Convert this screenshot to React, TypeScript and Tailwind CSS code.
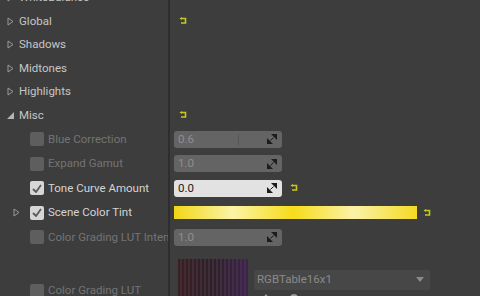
import React from 'react';

const font = { fontFamily: 'Roboto, "Noto Sans", sans-serif' };

function Reset() {
  return (
    <svg width="9" height="8" viewBox="0 0 9 8" className="shrink-0">
      <path d="M3 1.5 H6.5 V6 H2" fill="none" stroke="#c8c81e" strokeWidth="1.6" />
      <path d="M0.5 1.5 L3 0 L3 3 Z" fill="#c8c81e" />
    </svg>
  );
}

function Closed() {
  return (
    <svg width="7" height="9" viewBox="0 0 7 9" className="shrink-0">
      <path d="M1 1 L6 4.5 L1 8 Z" fill="none" stroke="#9a9a9a" strokeWidth="1" />
    </svg>
  );
}

function Open() {
  return (
    <svg width="7" height="7" viewBox="0 0 7 7" className="shrink-0">
      <path d="M7 0 L7 7 L0 7 Z" fill="#b4b4b4" />
    </svg>
  );
}

function Spin() {
  return (
    <svg width="10" height="10" viewBox="0 0 10 10" className="shrink-0">
      <path d="M4 0 H10 V6 Z" fill="#1c1c1c" />
      <path d="M0 4 V10 H6 Z" fill="#1c1c1c" />
      <path d="M3.5 6.5 L6.5 3.5" stroke="#1c1c1c" strokeWidth="1" />
    </svg>
  );
}

function Check({ on }: { on: boolean }) {
  return (
    <div
      className={`flex h-[14px] w-[14px] shrink-0 items-center justify-center rounded-[2px] ${
        on ? 'bg-[#d6d6d6]' : 'bg-[#5e5e5e]'
      }`}
    >
      {on && (
        <svg width="10" height="9" viewBox="0 0 10 9">
          <path d="M1 5 L4 8 L9 1" fill="none" stroke="#5a5a5a" strokeWidth="1.8" />
        </svg>
      )}
    </div>
  );
}

function NumField({ value, on, slider }: { value: string; on?: boolean; slider?: boolean }) {
  return (
    <div
      className={`relative flex h-[17px] w-[108px] shrink-0 items-center justify-between rounded-[3px] pl-[4px] pr-[5px] text-[11.5px] ${
        on ? 'bg-[#e2e2e2] text-[#202020]' : 'bg-[#646464] text-[#8e8e8e]'
      }`}
    >
      <span>{value}</span>
      {slider && <div className="absolute left-[64px] top-[3px] h-[11px] w-px bg-[#555]" />}
      <Spin />
    </div>
  );
}

function Header({ label, open, reset }: { label: string; open?: boolean; reset?: boolean }) {
  return (
    <div className="flex h-[23.5px] shrink-0">
      <div className="flex w-[170px] shrink-0 items-center gap-[5px] border-r-2 border-[#2e2e2e] pl-[7px] text-[11.5px] text-[#c6c6c6]">
        <span className="flex w-[7px] justify-center">{open ? <Open /> : <Closed />}</span>
        <span>{label}</span>
      </div>
      <div className="flex flex-1 items-center pl-[9px]">{reset && <Reset />}</div>
    </div>
  );
}

function Prop({
  label,
  on,
  arrow,
  children,
  h = 'h-[24.5px]',
}: {
  label: string;
  on: boolean;
  arrow?: boolean;
  children?: React.ReactNode;
  h?: string;
}) {
  return (
    <div className={`flex shrink-0 ${h}`}>
      <div className="flex w-[170px] shrink-0 items-center overflow-hidden whitespace-nowrap border-r-2 border-[#2e2e2e] text-[11.5px]">
        <span className="flex w-[30px] shrink-0 justify-center pl-[3px]">{arrow && <Closed />}</span>
        <Check on={on} />
        <span className={`ml-[4px] min-w-0 flex-1 overflow-hidden ${on ? 'text-[#d4d4d4]' : 'text-[#747474]'}`}>
          {label}
        </span>
      </div>
      <div className="flex flex-1 items-center pl-[4px]">{children}</div>
    </div>
  );
}

export default function App() {
  return (
    <div className="h-[296px] w-[480px] overflow-hidden bg-[#3d3d3d]" style={font}>
      <div className="-mt-[14px] flex flex-col">
        <Header label="WhiteBalance" />
        <Header label="Global" reset />
        <Header label="Shadows" />
        <Header label="Midtones" />
        <Header label="Highlights" />
        <Header label="Misc" open reset />
        <Prop label="Blue Correction" on={false}>
          <NumField value="0.6" slider />
        </Prop>
        <Prop label="Expand Gamut" on={false}>
          <NumField value="1.0" />
        </Prop>
        <Prop label="Tone Curve Amount" on>
          <NumField value="0.0" on />
          <span className="ml-[8px]">
            <Reset />
          </span>
        </Prop>
        <Prop label="Scene Color Tint" on arrow>
          <div className="h-[13px] w-[243px] shrink-0 bg-[linear-gradient(90deg,#f2d616_0%,#fbf4a6_24%,#f7dc1a_49%,#fbf2a8_74%,#f4da22_100%)]" />
          <span className="ml-[6px]">
            <Reset />
          </span>
        </Prop>
        <Prop label="Color Grading LUT Intensity" on={false}>
          <NumField value="1.0" />
        </Prop>
        <Prop label="Color Grading LUT" on={false} h="h-[82px]">
          <div className="flex h-full flex-1 items-start pl-[4px] pt-[9px]">
            <div className="relative h-[70px] w-[70px] shrink-0 bg-[repeating-linear-gradient(90deg,#2b2224_0px,#2b2224_2px,#3f2d3c_2px,#3f2d3c_4px)]">
              <div className="absolute inset-0 bg-[linear-gradient(90deg,rgba(90,30,30,0.25),rgba(0,0,0,0)_50%,rgba(90,40,140,0.35))]" />
            </div>
            <div className="ml-[6px] mt-[11px] flex shrink-0 flex-col">
              <div className="flex h-[20px] w-[176px] items-center justify-between rounded-[2px] bg-[#474747] pl-[3px] pr-[6px] text-[11.5px] text-[#8a8a8a]">
                <span>RGBTable16x1</span>
                <svg width="8" height="5" viewBox="0 0 8 5">
                  <path d="M0 0 H8 L4 5 Z" fill="#8a8a8a" />
                </svg>
              </div>
              <div className="mt-[4px] flex gap-[20px] pl-[8px]">
                <svg width="8" height="8" viewBox="0 0 8 8">
                  <path d="M4 0 L8 5 H0 Z" fill="#9a9a9a" />
                </svg>
                <div className="h-[8px] w-[8px] rounded-full bg-[#9a9a9a]" />
              </div>
            </div>
          </div>
        </Prop>
      </div>
    </div>
  );
}
